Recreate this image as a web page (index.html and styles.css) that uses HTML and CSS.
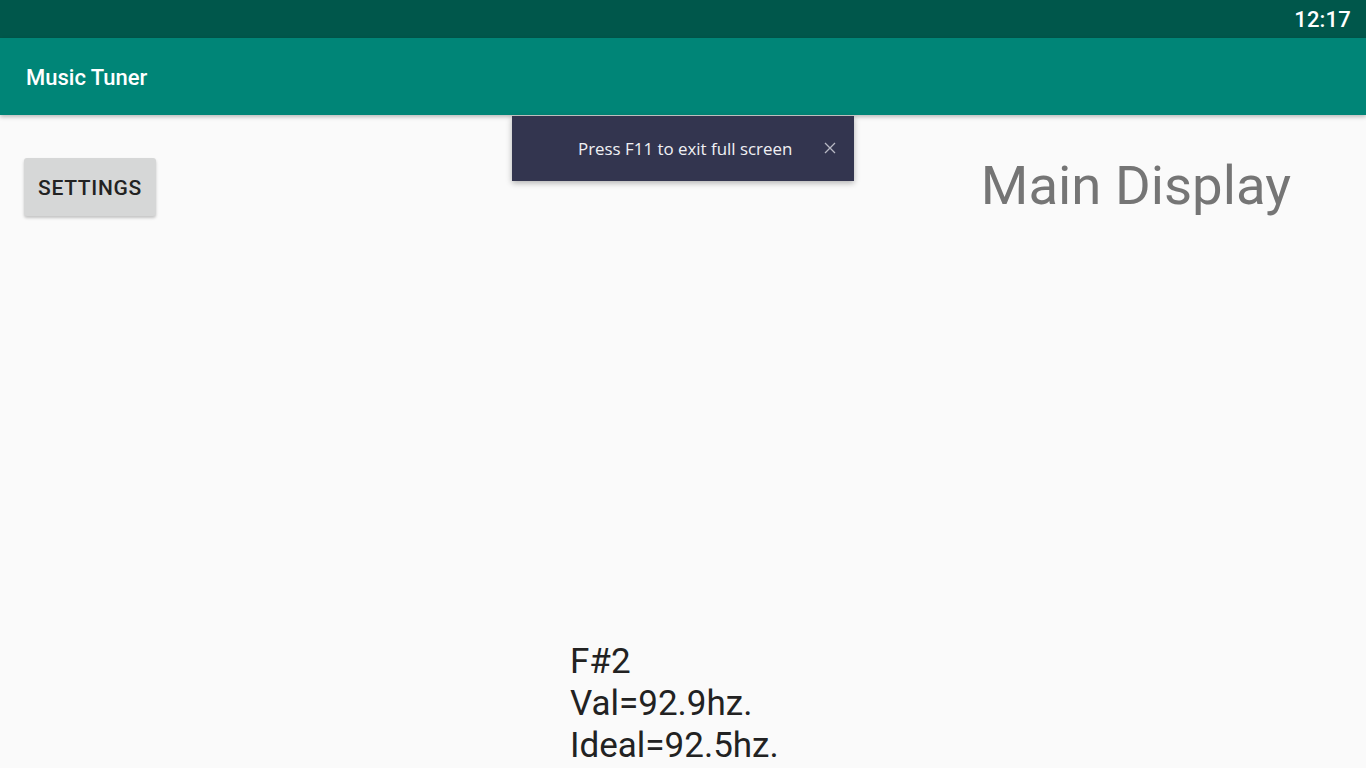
FILE: index.html
```html
<!DOCTYPE html>
<html>
<head>
<meta charset="utf-8">
<link rel="stylesheet" href="styles.css">
</head>
<body>
<div class="screen">
  <div class="statusbar"><span class="clock">12:17</span></div>
  <div class="appbar"><span class="title">Music Tuner</span></div>
  <div class="content">
    <div class="toprow">
      <button class="btn">SETTINGS</button>
      <div class="heading">Main Display</div>
    </div>
    <div class="readout">
      <div>F#2</div>
      <div>Val=92.9hz.</div>
      <div>Ideal=92.5hz.</div>
    </div>
  </div>
  <div class="toast">
    <span class="toast-text">Press F11 to exit full screen</span>
    <svg class="toast-x" width="12" height="12" viewBox="0 0 12 12"><path d="M1 1L11 11M11 1L1 11" stroke="#b8b9c4" stroke-width="1.3" fill="none"/></svg>
  </div>
</div>
</body>
</html>
```
FILE: styles.css
```css
* { box-sizing: border-box; }
html, body { margin: 0; padding: 0; }
body { font-family: Roboto, "Noto Sans", sans-serif; background: #fafafa; overflow: hidden; }
.screen { position: relative; width: 1366px; height: 768px; display: flex; flex-direction: column; background: #fafafa; }
.statusbar { height: 38px; background: #00574b; display: flex; justify-content: flex-end; align-items: center; padding-right: 15px; flex-shrink: 0; }
.clock { color: #ffffff; font-size: 22px; font-weight: 500; letter-spacing: 0.2px; margin-top: 1px; }
.appbar { height: 77px; background: #008577; display: flex; align-items: center; padding-left: 26px; box-shadow: 0 2px 4px rgba(0,0,0,0.25); flex-shrink: 0; position: relative; z-index: 1; }
.title { color: #ffffff; font-size: 22px; font-weight: 500; margin-top: 2px; }
.content { flex: 1; display: flex; flex-direction: column; justify-content: space-between; }
.toprow { display: flex; justify-content: space-between; align-items: flex-start; padding: 43px 75px 0 24px; }
.btn { width: 132px; height: 58px; border: none; border-radius: 3px; background: #d6d7d7; color: #222222; font-family: Roboto, sans-serif; font-size: 21px; font-weight: 500; letter-spacing: 0.7px; box-shadow: 0 2px 3px rgba(0,0,0,0.22); padding: 0; padding-top: 1px; }
.heading { font-size: 54.5px; color: #757575; margin-top: -5px; }
.readout { align-self: flex-start; margin-left: 570px; font-size: 35px; color: #222222; line-height: 42px; margin-bottom: 1px; }
.toast { position: absolute; left: 512px; top: 116px; width: 342px; height: 65px; background: #33354f; display: flex; align-items: center; padding-left: 66px; box-shadow: 0 2px 6px rgba(0,0,0,0.3); z-index: 2; }
.toast-text { color: #f0f0f4; font-family: "Open Sans", "Noto Sans", sans-serif; font-size: 16.9px; }
.toast-x { position: absolute; left: 312px; top: 26px; }
```
